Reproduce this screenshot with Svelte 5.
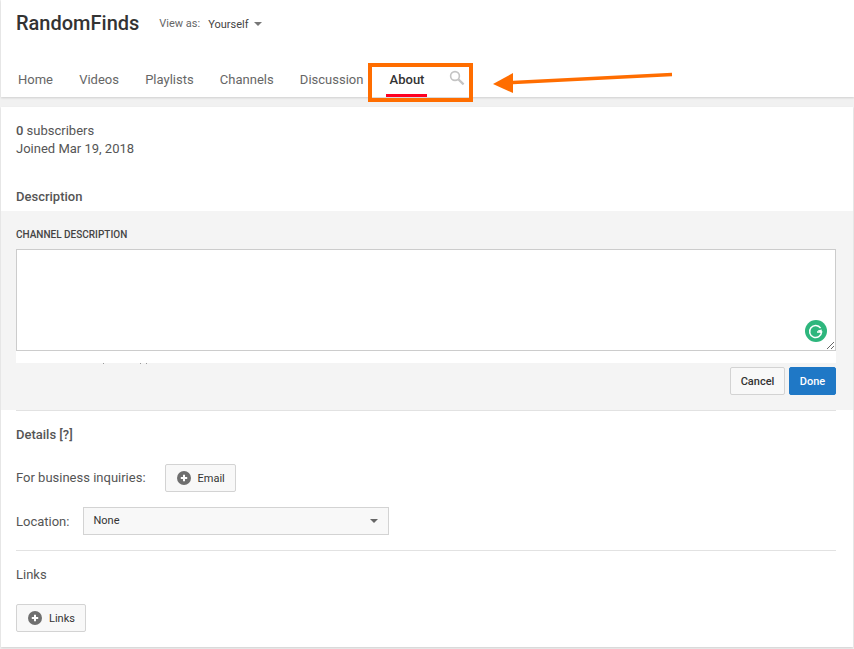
<script lang="ts">
  const tabs = ["Home", "Videos", "Playlists", "Channels", "Discussion", "About"];
  const activeTab = "About";
</script>

<div class="page">
  <header class="channel-header">
    <div class="title-row">
      <h1>RandomFinds</h1>
      <span class="view-label">View as:</span>
      <span class="view-value">Yourself</span>
      <span class="caret"></span>
    </div>
    <nav class="tabs">
      {#each tabs as tab}
        <span class="tab" class:active={tab === activeTab}>{tab}</span>
      {/each}
      <svg class="search" width="16" height="16" viewBox="0 0 16 16" fill="none" stroke="#c4c4c4">
        <circle cx="6" cy="6" r="4.4" stroke-width="1.6" />
        <path d="M9.4 9.4 14.6 14.4" stroke-width="2.2" />
      </svg>
    </nav>
  </header>

  <main class="card">
    <section class="stats">
      <div><b>0</b> subscribers</div>
      <div>Joined Mar 19, 2018</div>
    </section>

    <h2 class="desc-title">Description</h2>

    <section class="editor">
      <div class="editor-label">CHANNEL DESCRIPTION</div>
      <div class="field">
        <textarea aria-label="Channel description"></textarea>
        <svg class="grammarly" width="22" height="22" viewBox="0 0 22 22">
          <circle cx="11" cy="11" r="11" fill="#2eb67d" />
          <path d="M15.6 8.2A6 6 0 1 0 16.6 12H12" fill="none" stroke="#fff" stroke-width="1.5" />
          <path d="M12.6 10.6 16.8 9.6 16.6 13.4Z" fill="#fff" />
        </svg>
      </div>
      
      <div class="hint-strip"></div>
      <div class="editor-actions">
        <button type="button" class="btn cancel">Cancel</button>
        <button type="button" class="btn done">Done</button>
      </div>
    </section>

    <section class="details">
      <hr />
      <h2>Details [?]</h2>
      <div class="row inquiries">
        <span class="row-label">For business inquiries:</span>
        <button type="button" class="btn add">
          <svg width="14" height="14" viewBox="0 0 14 14">
            <circle cx="7" cy="7" r="7" fill="#6f6f6f" />
            <path d="M7 3.8v6.4M3.8 7h6.4" stroke="#fff" stroke-width="2" />
          </svg>
          Email
        </button>
      </div>
      <div class="row location">
        <span class="row-label">Location:</span>
        <div class="select">
          <span>None</span>
          <span class="caret dark"></span>
        </div>
      </div>
      <hr class="second" />
      <h2 class="links-title">Links</h2>
      <button type="button" class="btn add links-btn">
        <svg width="14" height="14" viewBox="0 0 14 14">
          <circle cx="7" cy="7" r="7" fill="#6f6f6f" />
          <path d="M7 3.8v6.4M3.8 7h6.4" stroke="#fff" stroke-width="2" />
        </svg>
        Links
      </button>
    </section>
  </main>

  <!-- annotation drawn on top of the screenshot -->
  <div class="highlight"></div>
  <svg class="arrow" width="854" height="120" viewBox="0 0 854 120">
    <path d="M672 74.500 505 83" stroke="#ff6d00" stroke-width="3.500" fill="none" />
    <path d="M493 84 513 73 513 93Z" fill="#ff6d00" />
  </svg>
</div>

<style>
  :global(body) {
    background: #f1f1f1;
    font-family: Roboto, "Liberation Sans", sans-serif;
    color: #555;
  }

  .page {
    position: relative;
    width: 854px;
    height: 649px;
    overflow: hidden;
  }

  .channel-header {
    height: 97px;
    margin-left: 1px;
    background: #fff;
    box-shadow: 0 1px 2px rgba(0, 0, 0, 0.14);
    box-sizing: border-box;
    padding: 11px 0 0 15px;
  }

  .title-row {
    display: flex;
    align-items: center;
    height: 24px;
  }

  h1 {
    margin: 0 20px 0 0;
    font-size: 20px;
    font-weight: 500;
    color: #333;
  }

  .view-label {
    font-size: 11px;
    color: #666;
    margin: 1px 8px 0 0;
  }

  .view-value {
    font-size: 11px;
    color: #444;
    margin: 3px 5px 0 0;
  }

  .caret {
    width: 0;
    height: 0;
    margin-top: 2px;
    border-left: 4px solid transparent;
    border-right: 4px solid transparent;
    border-top: 4px solid #777;
  }

  .tabs {
    display: flex;
    align-items: center;
    gap: 26.200px;
    margin: 27px 0 0 2px;
    height: 36px;
  }

  .tab {
    font-size: 13px;
    line-height: 36px;
    color: #666;
  }

  .tab.active {
    font-weight: 500;
    color: #333;
  }

  .tab.active::after {
    content: "";
    position: absolute;
    left: 386px;
    top: 94px;
    width: 41px;
    height: 3px;
    background: #ff0022;
  }

  .search {
    margin: -5px 0 0 -2px;
  }

  .card {
    margin: 10px 1px 0;
    height: 540px;
    background: #fff;
    box-shadow: 0 1px 2px rgba(0, 0, 0, 0.14);
  }

  .stats {
    padding: 15px 15px 0;
    font-size: 13px;
    line-height: 18px;
    color: #555;
  }

  .stats b {
    font-weight: 500;
  }

  h2 {
    margin: 0;
    font-size: 13px;
    font-weight: 500;
    line-height: 18px;
    color: #555;
  }

  .desc-title {
    padding: 30px 15px 0;
    height: 53px;
    box-sizing: border-box;
  }

  .editor {
    height: 199px;
    background: #f4f4f4;
    padding: 0 17px 0 15px;
    box-sizing: border-box;
  }

  .editor-label {
    padding-top: 18px;
    font-size: 10px;
    line-height: 12px;
    font-weight: 500;
    color: #444;
  }

  .field {
    position: relative;
    margin-top: 8px;
    height: 102px;
  }

  textarea {
    display: block;
    width: 100%;
    height: 102px;
    margin: 0;
    box-sizing: border-box;
    border: 1px solid #ccc;
    background: #fff;
    outline: none;
  }

  .grammarly {
    position: absolute;
    right: 9px;
    bottom: 9px;
  }

  .hint-strip {
    position: relative;
    height: 12px;
    background: #fff;
  }

  .hint-strip::after {
    content: "";
    position: absolute;
    left: 0;
    right: 0;
    top: 12px;
    height: 1px;
    background:
      linear-gradient(#999, #999) 87px 0 / 1px 1px no-repeat,
      linear-gradient(#999, #999) 124px 0 / 1px 1px no-repeat,
      linear-gradient(#999, #999) 130px 0 / 1px 1px no-repeat;
  }

  .editor-actions {
    display: flex;
    justify-content: flex-end;
    gap: 4px;
    margin-top: 4px;
  }

  .btn {
    height: 28px;
    padding: 0 10px;
    box-sizing: border-box;
    border: 1px solid #d3d3d3;
    border-radius: 2px;
    background: #f8f8f8;
    font-family: inherit;
    font-size: 11px;
    font-weight: 500;
    color: #333;
  }

  .cancel {
    width: 55px;
    padding: 0;
  }

  .done {
    width: 47px;
    padding: 0;
    background: #1f78c6;
    border-color: #1f78c6;
    color: #fff;
  }

  .details {
    padding: 0 17px 0 15px;
  }

  hr {
    margin: 0;
    border: 0;
    border-top: 1px solid #e2e2e2;
  }

  .details h2 {
    margin-top: 15px;
  }

  .row {
    display: flex;
    align-items: center;
  }

  .row-label {
    font-size: 13px;
    color: #555;
  }

  .inquiries {
    margin-top: 20px;
    gap: 19px;
  }

  .inquiries .row-label {
    margin-bottom: 2px;
  }

  .add {
    display: flex;
    align-items: center;
    gap: 7px;
    padding: 0 10px 0 11px;
    font-weight: 400;
  }

  .location {
    margin-top: 15px;
    gap: 14px;
  }

  .select {
    display: flex;
    align-items: center;
    justify-content: space-between;
    width: 306px;
    height: 28px;
    box-sizing: border-box;
    padding: 0 10px 2px 9px;
    border: 1px solid #d3d3d3;
    background: #f8f8f8;
    font-size: 11px;
    color: #333;
  }

  .select .caret {
    margin-top: 2px;
  }

  .caret.dark {
    border-top-color: #666;
  }

  .second {
    margin-top: 15px;
  }

  .details .links-title {
    margin-top: 15px;
    font-weight: 400;
  }

  .links-btn {
    margin-top: 20px;
  }

  .highlight {
    position: absolute;
    left: 368px;
    top: 63px;
    width: 105px;
    height: 39px;
    box-sizing: border-box;
    border: 4px solid #ff6d00;
  }

  .arrow {
    position: absolute;
    left: 0;
    top: 0;
    pointer-events: none;
  }
</style>
